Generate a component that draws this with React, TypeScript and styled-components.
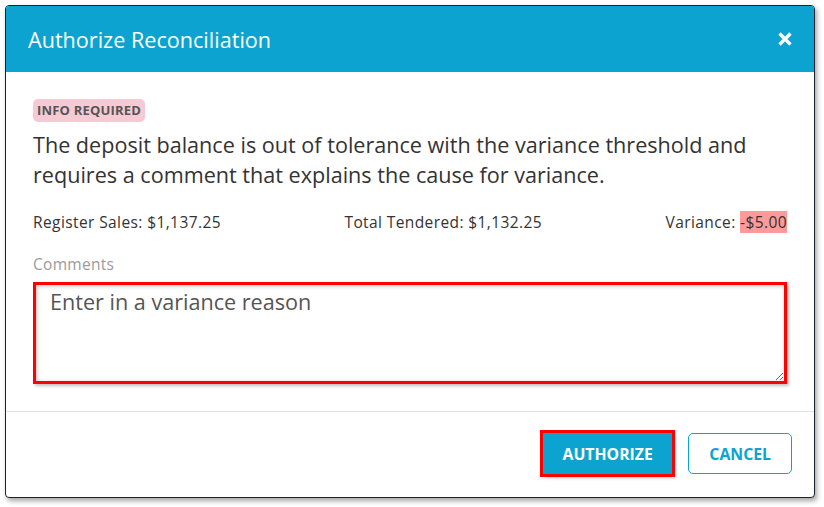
import React from "react";
import styled, { createGlobalStyle } from "styled-components";

const GlobalStyle = createGlobalStyle`
  html, body {
    margin: 0;
    background: #ffffff;
    font-family: "Open Sans", "Liberation Sans", sans-serif;
  }
`;

const Page = styled.div`
  padding: 5px 9px 10px 5px;
`;

const Dialog = styled.div`
  width: 808px;
  border: 1px solid #1b2230;
  border-radius: 4px;
  overflow: hidden;
  background: #ffffff;
  box-shadow: 2px 3px 5px rgba(0, 0, 0, 0.35);
`;

const Header = styled.div`
  height: 66px;
  background: #0ca3d0;
  display: flex;
  align-items: center;
  justify-content: space-between;
  padding: 0 21px 0 22px;
`;

const Title = styled.h2`
  margin: 0;
  font-size: 21.6px;
  font-weight: 400;
  color: #ffffff;
`;

const CloseButton = styled.button`
  border: 0;
  background: none;
  padding: 0;
  width: 16px;
  height: 16px;
  display: flex;
  cursor: pointer;
`;

const Body = styled.div`
  padding: 27px 27px 27px 27px;
  display: flex;
  flex-direction: column;
`;

const Badge = styled.span`
  align-self: flex-start;
  height: 23px;
  line-height: 23px;
  padding: 0 4px;
  border-radius: 5px;
  background: #f5cad4;
  color: #555555;
  font-size: 13px;
  font-weight: 700;
  letter-spacing: 0.2px;
`;

const Message = styled.p`
  margin: 8px 0 0;
  font-size: 21.6px;
  line-height: 30px;
  color: #333333;
`;

const Stats = styled.div`
  margin-top: 22px;
  display: flex;
  justify-content: space-between;
  font-size: 15.5px;
  letter-spacing: 0.4px;
  line-height: 21px;
  color: #333333;
`;

const Negative = styled.span`
  background: #ff9a9a;
`;

const Label = styled.label`
  margin-top: 21px;
  font-size: 15.5px;
  letter-spacing: 0.3px;
  line-height: 20px;
  color: #9a9a9a;
`;

const TextArea = styled.textarea`
  margin-top: 8px;
  height: 102px;
  box-sizing: border-box;
  border: 3px solid #ff0000;
  padding: 2px 14px;
  font-family: inherit;
  font-size: 21.6px;
  color: #555555;
  box-shadow: inset 1px 1px 4px rgba(0, 0, 0, 0.25), 2px 2px 3px rgba(0, 0, 0, 0.25);
  outline: none;
  resize: vertical;
  &::placeholder {
    color: #555555;
  }
`;

const Footer = styled.div`
  border-top: 1px solid #e2e2e2;
  padding: 21px 22px 23px 0;
  display: flex;
  justify-content: flex-end;
  gap: 16px;
`;

const Button = styled.button<{ $primary?: boolean }>`
  height: 41px;
  box-sizing: border-box;
  padding: 0 ${(p) => (p.$primary ? "18.5px" : "20px")};
  border-radius: 5px;
  font-family: inherit;
  font-size: 15.8px;
  font-weight: 700;
  cursor: pointer;
  border: 1px solid #0ca3d0;
  background: ${(p) => (p.$primary ? "#0ca3d0" : "#ffffff")};
  color: ${(p) => (p.$primary ? "#ffffff" : "#0ca3d0")};
  ${(p) =>
    p.$primary &&
    `
    border-radius: 0;
    outline: 3px solid #ff0000;
    box-shadow: 2px 3px 4px rgba(0, 0, 0, 0.35);
  `}
`;

export default function App() {
  return (
    <Page>
      <GlobalStyle />
      <Dialog>
        <Header>
          <Title>Authorize Reconciliation</Title>
          <CloseButton aria-label="Close">
            <svg width="16" height="16" viewBox="0 0 16 16">
              <path d="M2.5 2.5 L13.5 13.5 M13.5 2.5 L2.5 13.5" stroke="#ffffff" strokeWidth="3.2" />
            </svg>
          </CloseButton>
        </Header>
        <Body>
          <Badge>INFO REQUIRED</Badge>
          <Message>
            The deposit balance is out of tolerance with the variance threshold and
            requires a comment that explains the cause for variance.
          </Message>
          <Stats>
            <span>Register Sales: $1,137.25</span>
            <span>Total Tendered: $1,132.25</span>
            <span>
              Variance: <Negative>-$5.00</Negative>
            </span>
          </Stats>
          <Label>Comments</Label>
          <TextArea placeholder="Enter in a variance reason" />
        </Body>
        <Footer>
          <Button $primary>AUTHORIZE</Button>
          <Button>CANCEL</Button>
        </Footer>
      </Dialog>
    </Page>
  );
}
